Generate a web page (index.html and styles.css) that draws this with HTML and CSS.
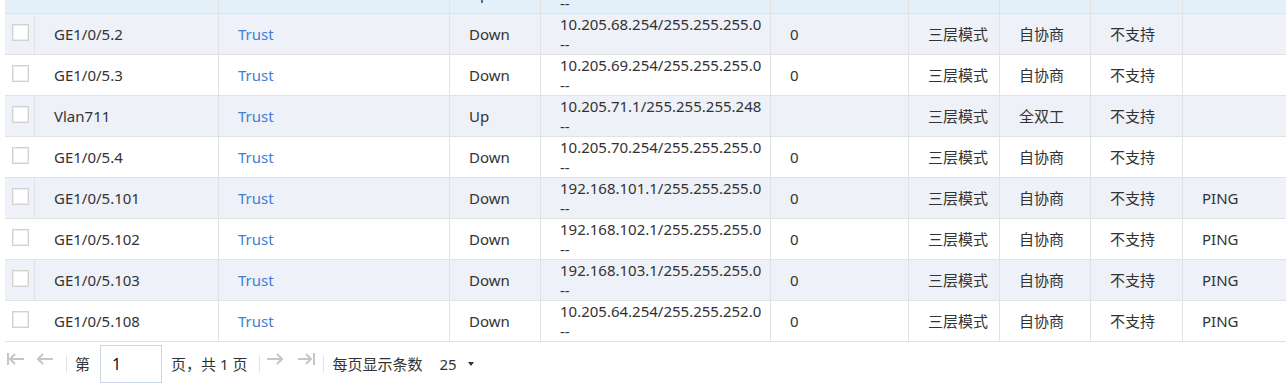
FILE: index.html
```html
<!DOCTYPE html>
<html lang="zh-CN">
<head>
<meta charset="utf-8">
<title>接口列表</title>
<link rel="stylesheet" href="styles.css">
</head>
<body>
<div class="grid-wrap">
  <div class="rows">
    <div class="row active">
      <div class="cell check"><span class="box"></span></div>
      <div class="cell"></div>
      <div class="cell link"></div>
      <div class="cell">Up</div>
      <div class="cell ip"><span>&nbsp;</span><span>--</span></div>
      <div class="cell"></div>
      <div class="cell"></div>
      <div class="cell"></div>
      <div class="cell"></div>
      <div class="cell"></div>
    </div>
    <div class="row striped">
      <div class="cell check"><span class="box"></span></div>
      <div class="cell">GE1/0/5.2</div>
      <div class="cell link">Trust</div>
      <div class="cell">Down</div>
      <div class="cell ip"><span>10.205.68.254/255.255.255.0</span><span>--</span></div>
      <div class="cell">0</div>
      <div class="cell">三层模式</div>
      <div class="cell">自协商</div>
      <div class="cell">不支持</div>
      <div class="cell"></div>
    </div>
    <div class="row">
      <div class="cell check"><span class="box"></span></div>
      <div class="cell">GE1/0/5.3</div>
      <div class="cell link">Trust</div>
      <div class="cell">Down</div>
      <div class="cell ip"><span>10.205.69.254/255.255.255.0</span><span>--</span></div>
      <div class="cell">0</div>
      <div class="cell">三层模式</div>
      <div class="cell">自协商</div>
      <div class="cell">不支持</div>
      <div class="cell"></div>
    </div>
    <div class="row striped">
      <div class="cell check"><span class="box"></span></div>
      <div class="cell">Vlan711</div>
      <div class="cell link">Trust</div>
      <div class="cell">Up</div>
      <div class="cell ip"><span>10.205.71.1/255.255.255.248</span><span>--</span></div>
      <div class="cell"></div>
      <div class="cell">三层模式</div>
      <div class="cell">全双工</div>
      <div class="cell">不支持</div>
      <div class="cell"></div>
    </div>
    <div class="row">
      <div class="cell check"><span class="box"></span></div>
      <div class="cell">GE1/0/5.4</div>
      <div class="cell link">Trust</div>
      <div class="cell">Down</div>
      <div class="cell ip"><span>10.205.70.254/255.255.255.0</span><span>--</span></div>
      <div class="cell">0</div>
      <div class="cell">三层模式</div>
      <div class="cell">自协商</div>
      <div class="cell">不支持</div>
      <div class="cell"></div>
    </div>
    <div class="row striped">
      <div class="cell check"><span class="box"></span></div>
      <div class="cell">GE1/0/5.101</div>
      <div class="cell link">Trust</div>
      <div class="cell">Down</div>
      <div class="cell ip"><span>192.168.101.1/255.255.255.0</span><span>--</span></div>
      <div class="cell">0</div>
      <div class="cell">三层模式</div>
      <div class="cell">自协商</div>
      <div class="cell">不支持</div>
      <div class="cell">PING</div>
    </div>
    <div class="row">
      <div class="cell check"><span class="box"></span></div>
      <div class="cell">GE1/0/5.102</div>
      <div class="cell link">Trust</div>
      <div class="cell">Down</div>
      <div class="cell ip"><span>192.168.102.1/255.255.255.0</span><span>--</span></div>
      <div class="cell">0</div>
      <div class="cell">三层模式</div>
      <div class="cell">自协商</div>
      <div class="cell">不支持</div>
      <div class="cell">PING</div>
    </div>
    <div class="row striped">
      <div class="cell check"><span class="box"></span></div>
      <div class="cell">GE1/0/5.103</div>
      <div class="cell link">Trust</div>
      <div class="cell">Down</div>
      <div class="cell ip"><span>192.168.103.1/255.255.255.0</span><span>--</span></div>
      <div class="cell">0</div>
      <div class="cell">三层模式</div>
      <div class="cell">自协商</div>
      <div class="cell">不支持</div>
      <div class="cell">PING</div>
    </div>
    <div class="row">
      <div class="cell check"><span class="box"></span></div>
      <div class="cell">GE1/0/5.108</div>
      <div class="cell link">Trust</div>
      <div class="cell">Down</div>
      <div class="cell ip"><span>10.205.64.254/255.255.252.0</span><span>--</span></div>
      <div class="cell">0</div>
      <div class="cell">三层模式</div>
      <div class="cell">自协商</div>
      <div class="cell">不支持</div>
      <div class="cell">PING</div>
    </div>
  </div>
</div>
<div class="pager">
  <svg class="pg-icon first" width="18" height="12" viewBox="0 0 18 12"><path d="M1 0v12M3 6h14M8 1L3 6l5 5"/></svg>
  <svg class="pg-icon prev" width="16" height="12" viewBox="0 0 16 12"><path d="M1 6h15M6 1L1 6l5 5"/></svg>
  <span class="sep sep1"></span>
  <span class="lbl di">第</span>
  <span class="page-input">1</span>
  <span class="lbl total">页，共 1 页</span>
  <span class="sep sep2"></span>
  <svg class="pg-icon next" width="16" height="12" viewBox="0 0 16 12"><path d="M0 6h15M10 1l5 5-5 5"/></svg>
  <svg class="pg-icon last" width="18" height="12" viewBox="0 0 18 12"><path d="M1 6h13M9 1l5 5-5 5M17 0v12"/></svg>
  <span class="sep sep3"></span>
  <span class="lbl per">每页显示条数</span>
  <span class="lbl size">25</span>
  <span class="caret"></span>
</div>
</body>
</html>
```
FILE: styles.css
```css
body {
  margin: 0;
  background: #fff;
  color: #333;
  font-family: "Noto Sans", "Noto Sans CJK SC", sans-serif;
  font-size: 15px;
}

.grid-wrap {
  margin-left: 5px;
  height: 342px;
  overflow: hidden;
}

.rows {
  margin-top: -27px;
}

.row {
  display: grid;
  grid-template-columns: 30px 184px 231px 91px 230px 138px 91px 91px 92px 1fr;
  height: 41px;
  box-sizing: border-box;
  border-bottom: 1px solid #e2e2e2;
  background: #fff;
}

.row.striped {
  background: #eef1f8;
}

.row.active {
  background: #e3f0f9;
}

.cell {
  display: flex;
  align-items: center;
  box-sizing: border-box;
  padding-left: 19px;
  border-right: 1px solid #e2e2e2;
  line-height: 20px;
  white-space: nowrap;
  overflow: hidden;
}

.cell:last-child {
  border-right: none;
}

.cell.check {
  align-items: flex-start;
  padding: 10px 0 0 7px;
  border-right-color: transparent;
}

.row.striped .cell.check {
  border-right-color: #dfe2e9;
}

.box {
  display: block;
  width: 17px;
  height: 17px;
  box-sizing: border-box;
  border: 1px solid #d2d2d2;
  box-shadow: inset 0 0 0 1px #ececec;
  background: #fff;
}

.cell.link {
  color: #3f7fd6;
}

.cell.ip {
  flex-direction: column;
  align-items: flex-start;
  justify-content: center;
}

/* pager */
.pager {
  display: flex;
  align-items: center;
  height: 44px;
}

.pg-icon {
  fill: none;
  stroke: #c6c6c6;
  stroke-width: 2;
  margin-bottom: 10px;
}

.pg-icon.first { margin-left: 7px; }
.pg-icon.prev { margin-left: 12px; }
.pg-icon.next { margin-left: 7px; }
.pg-icon.last { margin-left: 14px; }

.sep {
  width: 1px;
  height: 18px;
  background: #e6e6e6;
}

.sep1 { margin-left: 13px; }
.sep2 { margin-left: 12px; }
.sep3 { margin-left: 8px; }

.lbl {
  line-height: 20px;
}

.di { margin-left: 8px; }
.total { margin-left: 9px; }
.per { margin-left: 8px; }
.size { margin-left: 17px; }

.page-input {
  margin-left: 10px;
  width: 62px;
  height: 38px;
  box-sizing: border-box;
  border: 1px solid #c8d4e8;
  padding-left: 11px;
  line-height: 36px;
  font-size: 16px;
  color: #111;
}

.caret {
  margin-left: 11px;
  width: 0;
  height: 0;
  border-left: 3px solid transparent;
  border-right: 3px solid transparent;
  border-top: 4px solid #333;
}
```
